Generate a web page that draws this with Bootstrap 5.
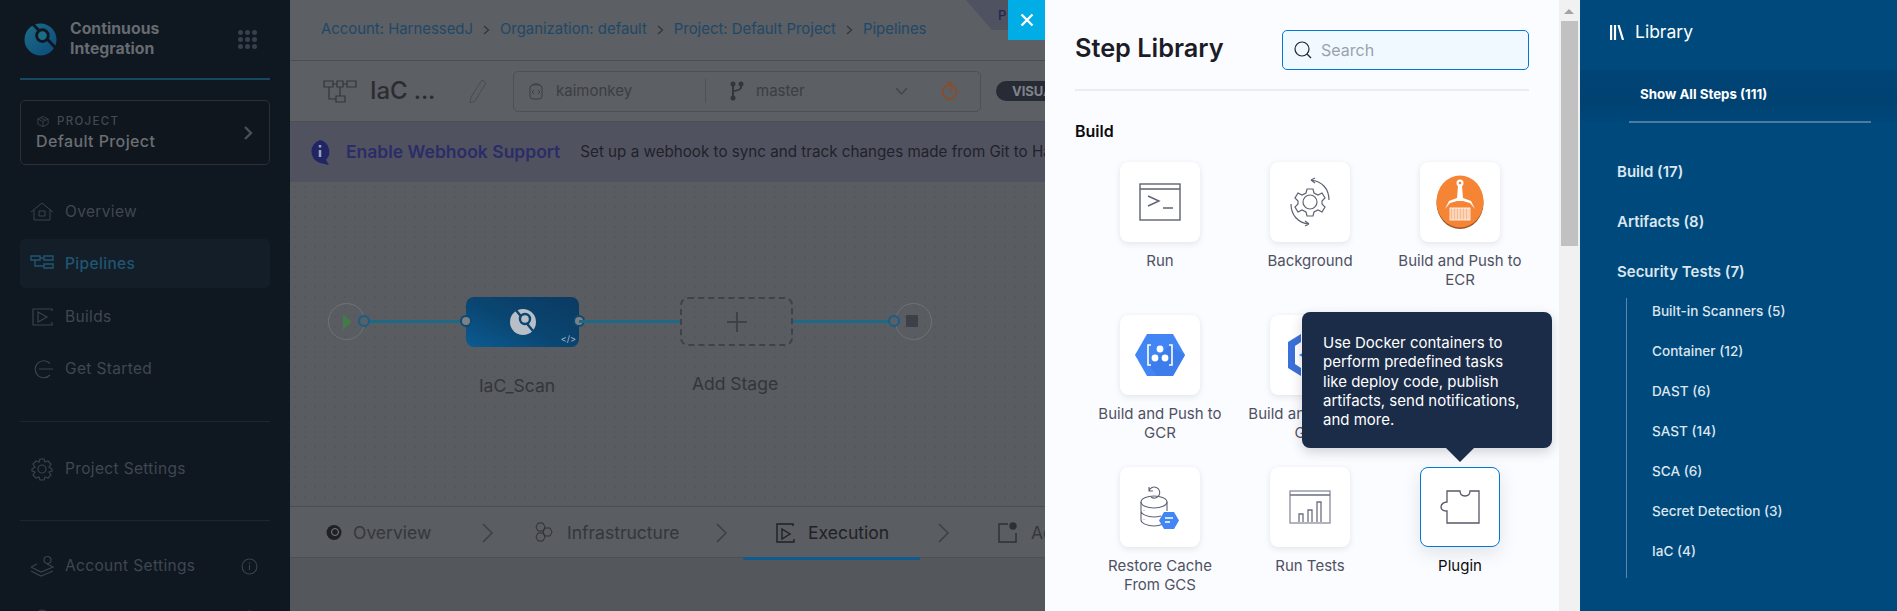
<!DOCTYPE html>
<html lang="en">
<head>
<meta charset="utf-8">
<title>Step Library</title>
<link href="https://cdn.jsdelivr.net/npm/bootstrap@5.3.0/dist/css/bootstrap.min.css" rel="stylesheet">
<style>
html,body{height:611px;overflow:hidden}
body{font-family:Inter,"Liberation Sans",sans-serif;background:#54575b;font-size:14px}
.app-shell{width:1897px;height:611px;overflow:hidden}
.side{width:290px;flex:none;background:#0f1720;padding:0 20px;overflow:hidden}
.side>*{flex:none}
.brand{height:80px;border-bottom:2px solid #16495f}
.brand-name{font-size:15.8px;font-weight:700;line-height:20px;color:#666b70;margin-left:13px}
.apps{margin-left:auto;margin-right:13px;display:grid;grid-template-columns:repeat(3,5px);gap:2px}
.apps i{width:5px;height:5px;border-radius:50%;background:#38414b}
.proj{height:65px;margin-top:20px;border:1px solid #2a3038;border-radius:5px;background:#10161e;padding:11px 16px}
.proj-k{font-size:11.5px;letter-spacing:1.3px;color:#434952;line-height:14px;font-weight:500}
.proj-v{font-size:16px;letter-spacing:.4px;font-weight:500;color:#6b6e72;line-height:20px;margin:3px 0 0 -1px}
.navi{margin-top:21px}
.navi a{height:49px;padding:2px 10px 0;margin-bottom:3.5px;border-radius:5px;color:#3f4752;font-size:15.5px;letter-spacing:.35px;text-decoration:none;gap:11px;flex:none}
.navi a.on{background:#141e28;color:#1f5672;font-weight:500}
.navi svg{width:24px;height:24px;flex:none}
.navi svg.info{width:17px;height:17px;margin-right:2px}
.rule{border-top:1px solid #1d252e;margin:0}
.rule-a{margin-top:25px}
.rule-b{margin-top:24px}
.navi-c{margin-top:20px}
.mainp{width:755px;flex:none;background:#595c60;position:relative;overflow:hidden;color:#3b3e44}
.mainp>*{flex:none}
.crumbs{height:61px;border-bottom:1px solid #4b4e52;background:#5c5f63;padding-left:31px;padding-bottom:1px;color:#1f4868;font-size:14.9px;gap:10px;white-space:nowrap}
.tool{height:61px;background:#5c5f63;border-bottom:1px solid #4b4e52;padding-left:33px;white-space:nowrap}
.pname{font-size:24px;font-weight:500;color:#2b2d33;margin-left:13px;width:98px;letter-spacing:-.1px}
.gitbox{width:468px;height:41px;margin-left:25px;border:1px solid #4d5055;border-radius:5px;padding:0 15px;color:#3b3e44;font-size:15px;flex:none}
.pill{margin-left:15px;height:20px;padding:0 0 0 16px;width:120px;border-radius:10px;background:#272b36;color:#80838a;font-size:13px;font-weight:700;line-height:20px;flex:none}
.banner{height:60px;background:#50535f;padding-left:18px;white-space:nowrap}
.banner strong{font-size:17.5px;font-weight:600;color:#2b2c68;margin:0 20px 0 14px}
.banner span{color:#20222a;font-size:15.2px}
.stage{height:324px;background-color:#595c60;background-image:radial-gradient(#54575b 1px,transparent 1px);background-size:10px 10px;position:relative}
.tabs-row{height:52px;background:#5a5d61;border-top:1px solid #4b4e52;border-bottom:1px solid #4d5054;position:relative;color:#34373d;font-size:17.5px;white-space:nowrap}
.tabs-row>*{position:absolute}
.lower{flex:1 1 auto!important;background:#54575b}
.pi-tag{position:absolute;left:676px;top:0;width:60px;height:30px;background:#4f5260;clip-path:polygon(0 0,100% 0,100% 100%,26px 100%);color:#24264f;font-size:13px;padding:6px 0 0 32px;letter-spacing:3px;font-weight:500}
.nodeb{position:absolute}
.dotp{width:12px;height:12px;border-radius:50%;border:2.5px solid #145f8e;background:#5b5e62;position:absolute}
.ln{position:absolute;height:3px;background:#1e6a84;top:138px}
.ends{width:37px;height:37px;border-radius:50%;border:1px solid #6f7277;top:121px}
.stg{left:176px;top:115px;width:113px;height:50px;border-radius:8px;background:linear-gradient(205deg,#0a3a62,#0a4672 55%,#0b5b92)}
.adds{left:390px;top:115px;width:113px;height:49px;border:2px dashed #3f4249;border-radius:8px;color:#3f4249}
.lbl{position:absolute;font-size:17.5px;color:#33363c;transform:translateX(-50%)}
.libp{width:514px;flex:none;background:#fbfcff;position:relative;padding:30px 30px 0}
.close-x{position:absolute;left:-37px;top:0;width:37px;height:40px;background:#00ade4;border-bottom-left-radius:5px;color:#fff}
.lib-title{font-size:25.3px;font-weight:600;color:#1c1c28;line-height:35px}
.searchb{width:247px;height:40px;border:1px solid #0278d5;border-radius:5px;background:#f0f9ff;padding:0 11px;color:#9aa1ad;font-size:16px;gap:9px;margin-left:auto;margin-right:0}
.libhead{height:61px;border-bottom:2px solid #eaecf2;align-items:flex-start}
.libgroup{font-size:16px;font-weight:600;color:#0b0b0d;margin-top:30px;line-height:20px}
.stepgrid{width:450px;margin:21px 0 0 10px;grid-template-columns:repeat(3,150px);grid-auto-rows:152.5px}
.stepc{text-align:center;color:#4f5162;font-size:15px;line-height:19px}
.stepc .tile{width:80px;height:80px;margin:0 auto 9px;background:#fff;border-radius:8px;box-shadow:0 0 1px rgba(40,41,61,.06),0 2px 6px rgba(96,97,112,.14)}
.stepc.sel{color:#0b0b0d}
.stepc.sel .tile{border:1px solid #0278d5;box-shadow:0 6px 18px rgba(96,97,112,.16)}
.steplabel{width:136px;margin:0 auto}
.tipbox{position:absolute;left:257px;top:312px;width:250px;height:136px;padding:21px 28px 0 21px;background:#1b2c49;border-radius:8px;color:#fff;font-size:15px;line-height:19.3px;box-shadow:0 4px 12px rgba(40,41,61,.2)}
.tipbox::after{content:"";position:absolute;left:143px;bottom:-14px;border-left:15px solid transparent;border-right:15px solid transparent;border-top:15px solid #1b2c49}
.sbar{width:21px;flex:none;background:#f1f1f1;position:relative}
.sbar i{display:block;width:17px;margin:21px 0 0 2px;height:225px;background:#c1c1c1}
.sbar::before{content:"";position:absolute;left:5px;top:9px;border-left:5px solid transparent;border-right:5px solid transparent;border-bottom:5px solid #a3a3a3}
.cats{width:317px;flex:none;background:#00497c;color:#dbe6f0;position:relative}
.cat-top{height:70px;padding:0 0 6px 30px;color:#fff;font-size:17.5px;gap:11px}
.cat-all{height:52px;background:linear-gradient(#004476,#004272 60%,#00477a);padding:0 0 3px 60px;font-size:13.3px;font-weight:700;color:#fff;border:0}
.cat-line{border-top:2px solid #4e7aa0;margin:-1px 26px 0 49px}
.cat-list{padding:29px 0 0 37px;margin:0;list-style:none;font-size:15px}
.cat-list>li{font-weight:600;height:50px;line-height:40px}
.cat-list>li.cat-wrap{height:auto}
.cat-sub{list-style:none;margin:-4px 0 0 9px;padding:0 0 0 25px;border-left:1px solid #5d86a8;height:280px;font-weight:500;font-size:13.6px}
.cat-sub li{height:40px;line-height:27px}
</style>
</head>
<body>
<div class="app-shell d-flex">

<aside class="side d-flex flex-column">
  <div class="brand d-flex align-items-center">
    <svg width="33" height="33" viewBox="0 0 34 34" class="ms-1 flex-shrink-0"><defs><linearGradient id="g1" x1="0" y1="0" x2="1" y2="1"><stop offset="0" stop-color="#1d6d8a"/><stop offset="1" stop-color="#0b4a78"/></linearGradient></defs><ellipse cx="17" cy="17" rx="16.500" ry="16.500" fill="url(#g1)"/><path d="M9 1 32 25" stroke="#0f1720" stroke-width="3"/><circle cx="19" cy="13" r="6" fill="#1d6d8a" stroke="#0f1720" stroke-width="3"/></svg>
    <div class="brand-name">Continuous<br>Integration</div>
    <div class="apps"><i></i><i></i><i></i><i></i><i></i><i></i><i></i><i></i><i></i></div>
  </div>
  <div class="proj d-flex align-items-center justify-content-between">
    <div>
      <div class="proj-k d-flex align-items-center gap-2"><svg width="12" height="13" viewBox="0 0 14 14" fill="none" stroke="#3d434c"><path d="M7 1 13 4v6l-6 3-6-3V4zM1 4l6 3 6-3M7 7v6M4 2.500l6 3"/></svg>PROJECT</div>
      <div class="proj-v">Default Project</div>
    </div>
    <svg width="10" height="14" viewBox="0 0 10 14" fill="none" stroke="#4a4f56" stroke-width="2.400"><path d="M2 1l6 6-6 6"/></svg>
  </div>
  <nav class="navi nav flex-column">
    <a href="#" class="d-flex align-items-center"><svg viewBox="0 0 24 24" fill="none" stroke="#3a424c"><path d="M1 12 12 3l11 9M4 10v10h16V10M9 16h6v-5H9z"/></svg>Overview</a>
    <a href="#" class="d-flex align-items-center on"><svg viewBox="0 0 24 24" fill="none" stroke="#1f5672" stroke-width="1.400"><path d="M1 4h9v4H1zM14 4h9v4h-9zM14 12h9v4h-9zM10 6h4M5 8v6h9"/></svg>Pipelines</a>
    <a href="#" class="d-flex align-items-center"><svg viewBox="0 0 24 24" fill="none" stroke="#3a424c" stroke-width="1.200"><path d="M22 6V4H3v16h19v-3"/><path d="M8 7l9 5-9 5z"/></svg>Builds</a>
    <a href="#" class="d-flex align-items-center"><svg viewBox="0 0 24 24" fill="none" stroke="#3a424c" stroke-width="1.200"><path d="M20 6.500A8.500 8.500 0 1 0 20 18M9 12h14"/></svg>Get Started</a>
  </nav>
  <hr class="rule rule-a opacity-100">
  <nav class="navi nav flex-column">
    <a href="#" class="d-flex align-items-center"><svg viewBox="0 0 24 24" fill="none" stroke="#3a424c" stroke-width="1.200"><circle cx="12" cy="12" r="4"/><path d="M10 2h4l1 3 3-1 3 3-2 3 3 2v2l-3 1 2 3-3 3-3-1-1 3h-4l-1-3-3 1-3-3 2-3-3-1v-2l3-2-2-3 3-3 3 1z"/></svg>Project Settings</a>
  </nav>
  <hr class="rule rule-b opacity-100">
  <nav class="navi navi-c nav flex-column">
    <a href="#" class="d-flex align-items-center"><svg viewBox="0 0 24 24" fill="none" stroke="#3a424c" stroke-width="1.200"><path d="M1 13l10 5 12-5-6-3M1 17l10 5 12-5M1 13l6-3M14 6a3.500 3.500 0 1 0 7 0 3.500 3.500 0 1 0-7 0"/></svg>Account Settings<svg class="ms-auto info" viewBox="0 0 24 24" fill="none" stroke="#3a424c" stroke-width="1.500"><circle cx="12" cy="12" r="10.500"/><path d="M12 10v7M12 6.500v2"/></svg></a>
    <a href="#" class="d-flex align-items-center" aria-hidden="true"><svg viewBox="0 0 24 24" fill="none" stroke="#3a424c" stroke-width="1.200"><circle cx="12" cy="8" r="5"/></svg><svg class="ms-auto info" viewBox="0 0 24 24" fill="none" stroke="#3a424c" stroke-width="1.500"><circle cx="12" cy="12" r="10.500"/></svg></a>
  </nav>
</aside>

<main class="mainp d-flex flex-column">
  <div class="crumbs d-flex align-items-center"><span>Account: HarnessedJ</span><svg width="7" height="10" viewBox="0 0 7 10" fill="none" stroke="#33373c" stroke-width="1.300"><path d="M1 1l4.500 4L1 9"/></svg><span>Organization: default</span><svg width="7" height="10" viewBox="0 0 7 10" fill="none" stroke="#33373c" stroke-width="1.300"><path d="M1 1l4.500 4L1 9"/></svg><span>Project: Default Project</span><svg width="7" height="10" viewBox="0 0 7 10" fill="none" stroke="#33373c" stroke-width="1.300"><path d="M1 1l4.500 4L1 9"/></svg><span>Pipelines</span></div>
  <div class="tool d-flex align-items-center">
    <svg width="34" height="26" viewBox="0 0 34 26" fill="none" stroke="#33363c" stroke-width="1.200" class="flex-shrink-0"><path d="M1 3h9v6H1zM14 3h6v6h-6zM24 3h9v6h-9zM13 18h9v6h-9zM10 6h4M20 6h4M6 9v12h7M17 9v9"/></svg>
    <span class="pname flex-shrink-0">IaC ...</span>
    <svg width="20" height="26" viewBox="0 0 20 26" fill="none" stroke="#494c52" class="flex-shrink-0"><path d="M14 2l4 3L7 23l-5 2 1-6z"/></svg>
    <div class="gitbox d-flex align-items-center">
      <svg width="14" height="18" viewBox="0 0 14 18" fill="none" stroke="#3b3e44" class="flex-shrink-0"><rect x="1" y="3" width="12" height="14" rx="3"/><path d="M2 4c3-3 7-3 10 0M5 8l-2 2 2 2M9 8l2 2-2 2"/></svg>
      <span style="margin-left:13px;width:149px">kaimonkey</span>
      <span style="border-left:1px solid #4d5055;height:24px"></span>
      <svg width="14" height="22" viewBox="0 0 14 22" fill="#33363c" class="ms-4 flex-shrink-0"><circle cx="3" cy="4" r="2.500"/><circle cx="3" cy="18" r="2.500"/><circle cx="11" cy="4" r="2.500"/><path d="M2 4h2v14H2z"/><path d="M10 4h2v3c0 3-4 4-8 5v-2c3 0 6-1 6-3z"/></svg>
      <span style="margin-left:12px;width:139px">master</span>
      <svg width="13" height="9" viewBox="0 0 13 9" fill="none" stroke="#43464c" stroke-width="1.500" class="flex-shrink-0"><path d="M1 1l5.500 6L12 1"/></svg>
      <svg width="17" height="20" viewBox="0 0 17 20" fill="none" stroke="#94491c" stroke-width="1.400" class="flex-shrink-0" style="margin-left:33px"><circle cx="8.500" cy="11" r="7"/><path d="M6 1.500h5M8.500 11l3-4"/></svg>
    </div>
    <div class="pill">VISUAL</div>
  </div>
  <div class="banner d-flex align-items-center">
    <svg width="24" height="26" viewBox="0 0 24 26" class="flex-shrink-0"><path d="M12 1a12 12 0 0 0 0 23l9 2-3-5A12 12 0 0 0 12 1z" fill="#222565"/><path d="M12 11v7M12 6v2.500" stroke="#9fa2b8" stroke-width="2.500"/></svg>
    <strong class="flex-shrink-0">Enable Webhook Support</strong><span class="flex-shrink-0">Set up a webhook to sync and track changes made from Git to Harness.</span>
  </div>
  <div class="stage">
    <div class="nodeb ends" style="left:38px"><svg width="12" height="18" viewBox="0 0 12 18" class="nodeb" style="left:13px;top:9px"><path d="M1 1l9 8-9 8z" fill="#44794a"/></svg></div>
    <div class="ln" style="left:76px;width:100px"></div>
    <div class="dotp" style="left:68px;top:133px"></div>
    <div class="nodeb stg d-flex align-items-center justify-content-center">
      <svg width="28" height="30" viewBox="0 0 28 30"><circle cx="14" cy="15" r="13" fill="#b9bfc6"/><path d="M6 2l18 22" stroke="#0a4670" stroke-width="2.400"/><circle cx="16" cy="12" r="5" fill="#b9bfc6" stroke="#0a4670" stroke-width="2.400"/></svg>
      <span class="nodeb" style="right:3px;bottom:2px;font-size:9px;color:#aebccb;line-height:12px">&lt;/&gt;</span>
      <div class="dotp" style="left:-6px;top:18px;border-color:#0c4a75;background:#7d8086"></div>
      <div class="dotp" style="right:-6px;top:18px;border-color:#0c4a75;background:#7d8086"></div>
    </div>
    <div class="ln" style="left:289px;width:101px"></div>
    <div class="nodeb adds d-flex align-items-center justify-content-center"><svg width="20" height="20" viewBox="0 0 20 20" stroke="#3f4249" stroke-width="2"><path d="M10 0v20M0 10h20"/></svg></div>
    <div class="ln" style="left:503px;width:100px"></div>
    <div class="nodeb ends" style="left:605px"><span class="nodeb" style="left:10px;top:11px;width:12px;height:12px;background:#3e4049;border-radius:1px"></span></div>
    <div class="dotp" style="left:598px;top:133px"></div>
    <div class="lbl" style="left:227px;top:191px">IaC_Scan</div>
    <div class="lbl" style="left:445px;top:189px">Add Stage</div>
  </div>
  <div class="tabs-row">
    <svg width="16" height="17" viewBox="0 0 16 17" style="left:36px;top:17px"><circle cx="8" cy="8.500" r="7.500" fill="#1f2126"/><circle cx="9" cy="8" r="3.500" fill="none" stroke="#7a7d82"/></svg>
    <span style="left:63px;top:13px">Overview</span>
    <svg width="12" height="20" viewBox="0 0 12 20" fill="none" stroke="#3c3f46" style="left:192px;top:16px" stroke-width="1.500"><path d="M1 1l9 9-9 9"/></svg>
    <svg width="20" height="20" viewBox="0 0 20 20" fill="none" stroke="#2e3036" style="left:244px;top:15px"><path d="M4 1h5l2 4-2 4H4L2 5zM11 6h5l2 4-2 4h-5l-2-4zM4 11h5l2 4-2 4H4l-2-4z"/></svg>
    <span style="left:277px;top:13px">Infrastructure</span>
    <svg width="12" height="20" viewBox="0 0 12 20" fill="none" stroke="#3c3f46" style="left:426px;top:16px" stroke-width="1.500"><path d="M1 1l9 9-9 9"/></svg>
    <svg width="19" height="20" viewBox="0 0 19 20" fill="none" stroke="#1f2126" stroke-width="1.400" style="left:486px;top:16px"><path d="M17 3V1H1v18h17v-3"/><path d="M6 6l8 5-8 5z"/></svg>
    <span style="left:518px;top:13px;color:#1f2126">Execution</span>
    <span style="left:453px;bottom:-3px;width:177px;height:3px;background:#0f5a8f;border-radius:2px"></span>
    <svg width="12" height="20" viewBox="0 0 12 20" fill="none" stroke="#3c3f46" style="left:648px;top:16px" stroke-width="1.500"><path d="M1 1l9 9-9 9"/></svg>
    <svg width="20" height="22" viewBox="0 0 20 22" fill="none" stroke="#2e3036" stroke-width="1.400" style="left:708px;top:14px"><path d="M10 3H1v18h17v-9"/><circle cx="15" cy="5" r="3" fill="#2e3036"/></svg>
    <span style="left:741px;top:13px">Advanced</span>
  </div>
  <div class="lower"></div>
  <div class="pi-tag">PI</div>
</main>

<section class="libp">
  <button class="close-x btn p-0 border-0 rounded-0 d-flex align-items-center justify-content-center" type="button" aria-label="Close"><svg width="14" height="14" viewBox="0 0 14 14" stroke="#fff" stroke-width="2.400"><path d="M1.500 1.500l11 11M12.500 1.500l-11 11"/></svg></button>
  <div class="libhead d-flex">
    <div class="lib-title">Step Library</div>
    <div class="searchb d-flex align-items-center"><svg width="18" height="18" viewBox="0 0 18 18" fill="none" stroke="#22222a" stroke-width="1.200"><circle cx="8" cy="8" r="7"/><path d="M13 13l4 4"/></svg>Search</div>
  </div>
  <div class="libgroup">Build</div>
  <div class="stepgrid d-grid">
    <div class="stepc"><div class="tile d-flex align-items-center justify-content-center"><svg width="42" height="38" viewBox="0 0 42 38" fill="none" stroke="#5f6272" stroke-width="1.400"><rect x="1" y="1" width="40" height="36"/><path d="M1 6h40M9 13l11 5-11 5M24 25h10"/></svg></div><div class="steplabel">Run</div></div>
    <div class="stepc"><div class="tile d-flex align-items-center justify-content-center"><svg width="42" height="50" viewBox="0 0 42 50" fill="none" stroke="#5f6272" stroke-width="1.200"><circle cx="21" cy="25" r="7"/><path d="M18 12h6l1 4 4 2 4-2 3 5-3 3v3l3 3-3 5-4-2-4 2-1 4h-6l-1-4-4-2-4 2-3-5 3-3v-3l-3-3 3-5 4 2 4-2z"/><path d="M22 3c11 1 18 9 18 20M22 3l4-2M22 3l4 3M20 47C9 46 2 38 2 27M20 47l-4 2M20 47l-4-3"/></svg></div><div class="steplabel">Background</div></div>
    <div class="stepc"><div class="tile d-flex align-items-center justify-content-center"><svg width="48" height="54" viewBox="0 0 48 54"><ellipse cx="24" cy="28" rx="23.500" ry="26" fill="#a0552a"/><ellipse cx="24" cy="26.500" rx="23.500" ry="26" fill="#f58535"/><circle cx="24" cy="8" r="3.500" fill="#fff"/><circle cx="24" cy="8" r="1.300" fill="#f58535"/><path d="M22 11h4l1 12h-6z" fill="#fff"/><path d="M9 34l4-8 8-3h6l8 3 4 8-5-6-7-2h-6l-7 2z" fill="#fff"/><g fill="none" stroke="#fff" stroke-width=".8"><rect x="14" y="33" width="20" height="12" fill="#f9b98c"/><path d="M17 33v12M20 33v12M23 33v12M26 33v12M29 33v12M32 33v12"/></g></svg></div><div class="steplabel">Build and Push to ECR</div></div>
    <div class="stepc"><div class="tile d-flex align-items-center justify-content-center"><svg width="50" height="44" viewBox="0 0 50 44"><path d="M12 1h26l12 21-12 21H12L0 22z" fill="#4285f4"/><path d="M34 13l16 9-12 21H22L14 32z" fill="#3b78e7" opacity=".7"/><g fill="#fff"><circle cx="25" cy="16" r="3.400"/><circle cx="20" cy="25" r="3.400"/><circle cx="30" cy="25" r="3.400"/></g><path d="M16 12h-3v20h3M34 12h3v20h-3" fill="none" stroke="#fff" stroke-width="1.600"/></svg></div><div class="steplabel">Build and Push to GCR</div></div>
    <div class="stepc"><div class="tile d-flex align-items-center justify-content-center"><svg width="46" height="44" viewBox="0 0 46 44"><path d="M14 1 1 9v26l13 8V35L8 31V13l6-4z" fill="#3b6fd9"/><path d="M12 22l12-7 12 7-12 7z" fill="#4285f4"/></svg></div><div class="steplabel">Build and Push to GAR</div></div>
    <div class="stepc"><div class="tile"></div></div>
    <div class="stepc"><div class="tile d-flex align-items-center justify-content-center"><svg width="42" height="48" viewBox="0 0 42 48" fill="none" stroke="#5f6272" stroke-width="1.100"><ellipse cx="15" cy="19" rx="13" ry="6"/><path d="M2 19v18c0 3 6 6 13 6 4 0 7-1 9-2M28 19v9M2 28c0 3 6 6 13 6 3 0 5-.5 7-1M5 27v.5M5 36v.5"/><path d="M10 8a5.500 5.500 0 1 1 2 6M10 4v4h4"/><path d="M25 29h10l5 8.500-5 8.500H25l-5-8.500z" fill="#4285f4" stroke="none"/><path d="M26 35h8M26 39h5" stroke="#fff" stroke-width="1.600"/></svg></div><div class="steplabel">Restore Cache From GCS</div></div>
    <div class="stepc"><div class="tile d-flex align-items-center justify-content-center"><svg width="42" height="34" viewBox="0 0 42 34" fill="none" stroke="#8b8d9c" stroke-width="1.300"><rect x="1" y="1" width="40" height="32"/><path d="M1 5h40M10 32V24h4v8M19 32V20h4v12M28 32V12h4v20" stroke="#6d6f80"/></svg></div><div class="steplabel">Run Tests</div></div>
    <div class="stepc sel"><div class="tile d-flex align-items-center justify-content-center"><svg width="40" height="34" viewBox="0 0 40 34" fill="none" stroke="#55586a" stroke-width="1.300"><path d="M7 1h13c0 3 1 5 5 5s5-2 5-5h9v32H7V21c-3 0-6-1-6-4s3-5 6-5z"/></svg></div><div class="steplabel">Plugin</div></div>
  </div>
  <div class="tipbox">Use Docker containers to perform predefined tasks like deploy code, publish artifacts, send notifications, and more.</div>
</section>
<div class="sbar"><i></i></div>

<aside class="cats">
  <div class="cat-top d-flex align-items-center"><svg width="14" height="15" viewBox="0 0 14 15" stroke="#fff" stroke-width="2.200"><path d="M1.100 0v15M5 0v15M8.500 0l4.500 15"/></svg><span>Library</span></div>
  <div class="cat-all d-flex align-items-center">Show All Steps (111)</div>
  <div class="cat-line"></div>
  <ul class="cat-list">
    <li>Build (17)</li>
    <li>Artifacts (8)</li>
    <li>Security Tests (7)</li>
    <li class="cat-wrap">
      <ul class="cat-sub">
        <li>Built-in Scanners (5)</li><li>Container (12)</li><li>DAST (6)</li><li>SAST (14)</li><li>SCA (6)</li><li>Secret Detection (3)</li><li>IaC (4)</li>
      </ul>
    </li>
  </ul>
</aside>
</div>
<script src="https://cdn.jsdelivr.net/npm/bootstrap@5.3.0/dist/js/bootstrap.bundle.min.js"></script>
</body>
</html>
